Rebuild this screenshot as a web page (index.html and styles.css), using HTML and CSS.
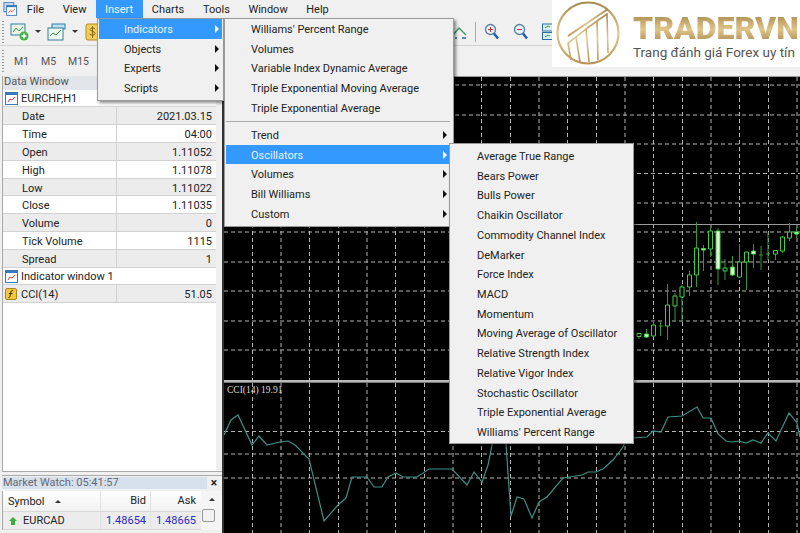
FILE: index.html
```html
<!DOCTYPE html>
<html lang="en">
<head>
    <meta charset="UTF-8">
    <meta name="viewport" content="width=device-width, initial-scale=1.0">
    <title>MetaTrader - Insert Oscillators</title>
    <link rel="stylesheet" href="styles.css">
</head>
<body>
    <!-- Menu bar -->
    <div class="menubar">
        <svg class="app-icon" width="16" height="16" viewBox="0 0 16 16">
            <rect x="1" y="1" width="11" height="10" fill="#cfe2f5" stroke="#3a78b8"/>
            <rect x="4" y="4" width="11" height="11" fill="#fff" stroke="#3a78b8"/>
            <rect x="4" y="4" width="11" height="2" fill="#3a78b8"/>
            <path d="M6 12l2-2 2 1 3-3" fill="none" stroke="#d23b3b"/>
        </svg>
        <a>File</a>
        <a>View</a>
        <a class="active">Insert</a>
        <a>Charts</a>
        <a>Tools</a>
        <a>Window</a>
        <a>Help</a>
    </div>

    <!-- Toolbars -->
    <div class="toolbar">
        <span class="grip"></span>
        <svg width="20" height="18" viewBox="0 0 20 18">
            <rect x="1" y="1" width="14" height="11" fill="#e8f4e8" stroke="#2f7f9f"/>
            <path d="M3 9l3-4 3 3 4-4" fill="none" stroke="#3a9a3a"/>
            <circle cx="14" cy="13" r="4.5" fill="#45b045"/>
            <path d="M14 10.500v5M11.500 13h5" stroke="#fff" stroke-width="1.500"/>
        </svg>
        <span class="caret"></span>
        <svg class="tb-second" width="20" height="18" viewBox="0 0 20 18">
            <rect x="5" y="1" width="13" height="5" fill="#bfe0f2" stroke="#2f7f9f"/>
            <rect x="1" y="5" width="15" height="12" fill="#eef8ee" stroke="#2f7f9f"/>
            <path d="M3 13l3-3 3 2 5-5" fill="none" stroke="#3a9a3a"/>
        </svg>
        <span class="caret"></span>
        <svg class="tb-third" width="14" height="18" viewBox="0 0 14 18">
            <rect x="1" y="1" width="13" height="16" rx="2" fill="#f3cf5a" stroke="#b58a1e"/>
            <path d="M10 6c-1-1.500-5-1.500-5 .5s5 1.500 5 4c0 2-4 2-5.500.5M7.500 3v12" fill="none" stroke="#8a6510"/>
        </svg>
        <div class="toolbar-right">
            <svg width="16" height="16" viewBox="0 0 16 16">
                <path d="M1 11l6-7 7 7" fill="none" stroke="#2f9a5a" stroke-width="1.300"/>
                <path d="M3 14h11" stroke="#2a5fa8" stroke-dasharray="2 5 7" stroke-width="1.500"/>
            </svg>
            <span class="tb-sep"></span>
            <svg width="16" height="18" viewBox="0 0 16 18">
                <circle cx="6.500" cy="6.500" r="5" fill="#eaf3fb" stroke="#5a7f9f" stroke-width="1.300"/>
                <path d="M4 6.500h5M6.500 4v5" stroke="#b03a3a"/>
                <path d="M10 10.500l4 5" stroke="#1f5fa8" stroke-width="2.500"/>
            </svg>
            <svg width="16" height="18" viewBox="0 0 16 18">
                <circle cx="6.500" cy="6.500" r="5" fill="#eaf3fb" stroke="#5a7f9f" stroke-width="1.300"/>
                <path d="M4 6.500h5" stroke="#b03a3a"/>
                <path d="M10 10.500l4 5" stroke="#1f5fa8" stroke-width="2.500"/>
            </svg>
            <svg width="12" height="18" viewBox="0 0 12 18">
                <rect x=".5" y="1" width="14" height="7" fill="#d8eef2" stroke="#2a6fa8"/>
                <rect x=".5" y="9.500" width="14" height="7" fill="#d8eef2" stroke="#2a6fa8"/>
                <path d="M3 5l3-2 2 1M3 14l3-2 2 1" fill="none" stroke="#3a9a3a"/>
            </svg>
        </div>
    </div>
    <div class="toolbar periods">
        <span class="grip"></span>
        <a>M1</a>
        <a>M5</a>
        <a>M15</a>
    </div>

    <div class="workspace">
        <!-- Left side panels -->
        <div class="sidebar">
            <div class="data-window">
                <div class="panel-title">Data Window</div>
                <div class="data-body">
                    <div class="row head">
                        <svg class="row-icon" width="13" height="13" viewBox="0 0 13 13">
                            <rect x=".5" y=".5" width="12" height="12" fill="#fff" stroke="#3a78b8"/>
                            <rect x="1" y="1" width="11" height="2" fill="#3a78b8"/>
                            <path d="M3 10l2-3 2 1 3-3" fill="none" stroke="#d23b3b"/>
                        </svg>
                        EURCHF,H1
                    </div>
                    <div class="row odd"><span class="label">Date</span><span class="value">2021.03.15</span></div>
                    <div class="row"><span class="label">Time</span><span class="value">04:00</span></div>
                    <div class="row odd"><span class="label">Open</span><span class="value">1.11052</span></div>
                    <div class="row"><span class="label">High</span><span class="value">1.11078</span></div>
                    <div class="row odd"><span class="label">Low</span><span class="value">1.11022</span></div>
                    <div class="row"><span class="label">Close</span><span class="value">1.11035</span></div>
                    <div class="row odd"><span class="label">Volume</span><span class="value">0</span></div>
                    <div class="row"><span class="label">Tick Volume</span><span class="value">1115</span></div>
                    <div class="row odd"><span class="label">Spread</span><span class="value">1</span></div>
                    <div class="row head">
                        <svg class="row-icon" width="13" height="13" viewBox="0 0 13 13">
                            <rect x=".5" y=".5" width="12" height="12" fill="#fff" stroke="#3a78b8"/>
                            <rect x="1" y="1" width="11" height="2" fill="#3a78b8"/>
                            <path d="M3 10l2-3 2 1 3-3" fill="none" stroke="#d23b3b"/>
                        </svg>
                        Indicator window 1
                    </div>
                    <div class="row odd">
                        <span class="label">
                            <svg class="func-icon" width="12" height="12" viewBox="0 0 12 12">
                                <rect x=".5" y=".5" width="11" height="11" rx="1.500" fill="#f2c73c" stroke="#a8861e"/>
                                <path d="M8 2.500C6.500 2 6 3 5.500 5.500S5 10 3.500 9.500M4 5.500h3.500" fill="none" stroke="#3a2c00"/>
                            </svg>
                            CCI(14)
                        </span>
                        <span class="value">51.05</span>
                    </div>
                </div>
            </div>

            <div class="market-watch">
                <div class="mw-title">
                    <span>Market Watch: 05:41:57</span>
                    <b>×</b>
                </div>
                <div class="mw-table">
                    <div class="mw-rows">
                        <div class="mw-row mw-head">
                            <span class="mw-symbol">Symbol <i class="sort-up"></i></span>
                            <span class="mw-num">Bid</span>
                            <span class="mw-num">Ask</span>
                        </div>
                        <div class="mw-row mw-quote">
                            <span class="mw-symbol">
                                <svg width="8" height="8" viewBox="0 0 8 8"><path d="M4 0l4 4H6v4H2V4H0z" fill="#3fae3f"/></svg>
                                EURCAD
                            </span>
                            <span class="mw-num price">1.48654</span>
                            <span class="mw-num price">1.48665</span>
                        </div>
                    </div>
                    <div class="mw-scroll">
                        <i class="scroll-up"></i>
                        <i class="scroll-thumb"></i>
                    </div>
                </div>
            </div>
        </div>

        <!-- Chart windows -->
        <div class="charts">
            <svg class="price-pane" width="576" height="303" viewBox="224 77 576 303">
                <path class="grid" d="M224 85H800M224 115H800M224 144H800M224 173.500H800M224 203H800M224 232H800M224 262H800M224 291H800M224 321H800M224 350H800"/>
                <path class="grid" d="M252.500 77V380M281 77V380M309.500 77V380M338.500 77V380M367 77V380M395.500 77V380M424.500 77V380M453 77V380M481.500 77V380M510.500 77V380M539 77V380M567.500 77V380M596.500 77V380M625 77V380M653.500 77V380M682.500 77V380M711 77V380M739.500 77V380M768.500 77V380M797 77V380"/>
                <path class="bid-line" d="M224 224.500H800"/>
                <path class="wick" d="M639 333v6M646.500 329v9M653.500 322v15M660.500 322v14M667.500 284v56M675 293v29M682 285v37M689.500 271v25M696.500 222v65M703.500 245v26M710.500 228v29M718 228v57M725 259v21M732.500 256v20M739.500 244v34M746.500 252v38M753.500 244v24M761 246v24M768 232v28M775.500 250v10M782.500 236v17M789.500 223v18M796.500 227v11M659 326h4M759 255h4M766 254h4"/>
                <path class="body" d="M637 333.500h4v3h-4zM651.500 325h4v11h-4zM665.500 305h4v21h-4zM673 296h4v10h-4zM680 287h4v10h-4zM687.500 275h4v12h-4zM694.500 248h4v27h-4zM708.500 231h4v18h-4zM723 268h4v3h-4zM737.500 262h4v15h-4zM744.500 252h4v10h-4zM773.500 250.500h4v3.500h-4zM780.500 237h4v14h-4zM787.500 232h4v6h-4z"/>
                <path class="body filled" d="M644.500 334h4v3h-4zM701.500 248.500h4v1.500h-4zM716 231h4v38h-4zM730.500 267h4v8h-4zM751.500 251h4v3h-4zM794.500 232h4v2h-4z"/>
            </svg>
            <div class="pane-split"></div>
            <div class="cci-pane">
                <span class="cci-label">CCI(14) 19.91</span>
                <svg width="576" height="150" viewBox="224 383 576 150">
                    <path class="grid" d="M224 431.500H800M224 454H800M224 478H800"/>
                    <path class="grid" d="M252.500 383V533M281 383V533M309.500 383V533M338.500 383V533M367 383V533M395.500 383V533M424.500 383V533M453 383V533M481.500 383V533M510.500 383V533M539 383V533M567.500 383V533M596.500 383V533M625 383V533M653.500 383V533M682.500 383V533M711 383V533M739.500 383V533M768.500 383V533M797 383V533"/>
                    <polyline class="cci-line" points="224,435 231,420 238,415 252,445 259,436 267,445 280,442 288,441 295,445 309,459 324,521 338,505 346,498 352,477 367,477 374,487 382,487 388,477 396,473 403,477 417,477 429,469 452,469 467,485 474,472 482,482 488,465 495,430 505,430 511,516 517,497 524,499 532,518 539,502 547,497 563,478 582,475 588,472 596,472 603,469 613,460 623,447 625,442 633,438 647,437 653,431 661,432 668,417 682,416 697,407 703,418 711,418 718,434 726,441 732,442 739,441 746,443 753,440 761,443 768,433 776,441 789,413 797,423 800,437"/>
                </svg>
            </div>
        </div>
    </div>

    <!-- Open Insert menu -->
    <div class="menu menu-insert">
        <div class="item selected">Indicators<i class="arrow"></i></div>
        <div class="item">Objects<i class="arrow"></i></div>
        <div class="item">Experts<i class="arrow"></i></div>
        <div class="item">Scripts<i class="arrow"></i></div>
    </div>
    <div class="menu menu-indicators">
        <div class="item">Williams' Percent Range</div>
        <div class="item">Volumes</div>
        <div class="item">Variable Index Dynamic Average</div>
        <div class="item">Triple Exponential Moving Average</div>
        <div class="item">Triple Exponential Average</div>
        <div class="menu-sep"></div>
        <div class="item">Trend<i class="arrow"></i></div>
        <div class="item selected">Oscillators<i class="arrow"></i></div>
        <div class="item">Volumes<i class="arrow"></i></div>
        <div class="item">Bill Williams<i class="arrow"></i></div>
        <div class="item">Custom<i class="arrow"></i></div>
    </div>
    <div class="menu menu-oscillators">
        <div class="item">Average True Range</div>
        <div class="item">Bears Power</div>
        <div class="item">Bulls Power</div>
        <div class="item">Chaikin Oscillator</div>
        <div class="item">Commodity Channel Index</div>
        <div class="item">DeMarker</div>
        <div class="item">Force Index</div>
        <div class="item">MACD</div>
        <div class="item">Momentum</div>
        <div class="item">Moving Average of Oscillator</div>
        <div class="item">Relative Strength Index</div>
        <div class="item">Relative Vigor Index</div>
        <div class="item">Stochastic Oscillator</div>
        <div class="item">Triple Exponential Average</div>
        <div class="item">Williams' Percent Range</div>
    </div>

    <!-- Logo on top -->
    <div class="brand">
        <svg class="brand-mark" width="66" height="66" viewBox="0 0 66 66">
            <defs>
                <linearGradient id="gold" x1="0" y1="0" x2="0" y2="1">
                    <stop offset="0" stop-color="#a98a4f"/>
                    <stop offset=".5" stop-color="#e2c98f"/>
                    <stop offset="1" stop-color="#b8945a"/>
                </linearGradient>
            </defs>
            <g fill="none" stroke="url(#gold)">
                <circle cx="32" cy="33" r="30.500" stroke-width="2.200"/>
                <path d="M12 36L52 9" stroke-width="2"/>
                <path d="M15 60l-3-17 8-6 4 25M24 62l-4-25 10-8 3 33M33 62l-3-33 11-8 1 39M42 60l-1-39 10-7 1 39" stroke-width="1.600"/>
            </g>
        </svg>
        <div class="brand-text">
            <div class="brand-name">TRADERVN</div>
            <div class="brand-sub">Trang đánh giá Forex uy tín</div>
        </div>
    </div>
</body>
</html>
```

FILE: styles.css
```css
* {
    margin: 0;
    padding: 0;
    box-sizing: border-box;
}

body {
    width: 800px;
    height: 533px;
    overflow: hidden;
    position: relative;
    background: #f0f0f0;
    color: #222;
    font-family: Roboto, "Noto Sans", sans-serif;
    font-size: 11px;
}

/* Menu bar */
.menubar {
    display: flex;
    align-items: center;
    height: 18px;
}

.app-icon {
    margin: 0 0 0 3px;
    width: 14.5px;
}

.menubar a {
    display: block;
    height: 18px;
    line-height: 20px;
    padding: 0 9.3px;
}

.menubar a.active {
    background: #3399ff;
    color: #eaf4ff;
}

/* Toolbars */
.toolbar {
    display: flex;
    align-items: center;
    height: 28px;
    border-bottom: 1px solid #d4d4d4;
    padding-left: 2px;
}

.grip {
    width: 2px;
    height: 22px;
    margin-right: 6px;
    background: repeating-linear-gradient(to bottom, #999 0 1px, transparent 1px 3px);
}

.caret {
    width: 0;
    height: 0;
    margin-left: 5px;
    border-left: 3px solid transparent;
    border-right: 3px solid transparent;
    border-top: 3px solid #333;
}

.tb-second {
    margin-left: 6px;
}

.tb-third {
    margin-left: 7px;
}

.toolbar-right {
    display: flex;
    align-items: center;
    position: absolute;
    left: 452px;
    top: 22px;
}

.toolbar-right svg {
    margin-right: 13px;
}

.toolbar-right svg:first-child {
    margin-right: 7px;
}

.tb-sep {
    width: 1px;
    height: 20px;
    background: #aaa;
    margin-right: 8px;
}

.periods {
    height: 30px;
    border-bottom: 0;
    color: #555;
    font-size: 10.5px;
}

.periods a {
    width: 27px;
    padding-left: 4px;
}

/* Workspace */
.workspace {
    display: flex;
    height: 457px;
}

.sidebar {
    display: flex;
    flex-direction: column;
    width: 222px;
    padding-left: 2px;
}

.data-window {
    height: 396px;
    border-left: 1px solid #a9a9a9;
    border-bottom: 1px solid #a9a9a9;
}

.panel-title {
    height: 14px;
    line-height: 11px;
    background: #e2e6ea;
    color: #555;
    padding-left: 1px;
}

.data-body {
    width: 213px;
    height: 381px;
    background: #fff;
}

.row {
    display: flex;
    height: 17.9px;
    border-bottom: 1px solid #d2d2d2;
}

.row.head {
    align-items: center;
    height: 17px;
    gap: 3px;
    padding-left: 2px;
}

.row.odd {
    background: #ececec;
}

.row-icon {
    flex: none;
}

.label {
    display: flex;
    align-items: center;
    gap: 4px;
    width: 114px;
    padding: 2px 0 0 19px;
    border-right: 1px solid #d2d2d2;
}

.label .func-icon {
    margin-left: -17px;
}

.value {
    flex: 1;
    display: flex;
    align-items: center;
    justify-content: flex-end;
    padding: 2px 4px 0 0;
}

/* Market watch */
.market-watch {
    flex: 1;
    margin-top: 3px;
    border-top: 1px solid #a9a9a9;
    padding-top: 1px;
}

.mw-title {
    display: flex;
    justify-content: space-between;
    align-items: center;
    height: 12px;
    line-height: 12px;
    color: #667;
    padding-right: 5px;
    font-size: 11px;
}

.mw-title span {
    flex: 1;
    background: #d6e1ec;
    margin-right: 4px;
    padding-left: 1px;
}

.mw-title b {
    color: #222;
    font-size: 12px;
}

.mw-table {
    display: flex;
    margin-top: 2px;
    border-left: 1px solid #a9a9a9;
}

.mw-rows {
    width: 198px;
    background: #fff;
}

.mw-row {
    display: flex;
    align-items: center;
    height: 21px;
    border-bottom: 1px solid #d8d8d8;
}

.mw-head {
    background: linear-gradient(to bottom, #fff, #f1f1f1);
}

.mw-quote {
    height: 18px;
    background: #ececec;
}

.mw-symbol {
    display: flex;
    align-items: center;
    gap: 5px;
    width: 97px;
    padding-left: 5px;
}

.mw-quote .mw-symbol {
    padding-left: 6px;
    gap: 6px;
}

.mw-num {
    width: 50px;
    height: 100%;
    line-height: 19px;
    text-align: right;
    padding-right: 4px;
    border-left: 1px solid #e2e2e2;
}

.price {
    color: #2a2ac0;
    line-height: 17px;
}

.sort-up {
    margin-left: 5px;
    border-left: 3px solid transparent;
    border-right: 3px solid transparent;
    border-bottom: 3px solid #333;
}

.mw-scroll {
    flex: 1;
    width: 15px;
    background: #f5f5f5;
    padding-top: 7px;
}

.scroll-up {
    display: block;
    width: 0;
    margin: 0 auto 8px;
    border-left: 3px solid transparent;
    border-right: 3px solid transparent;
    border-bottom: 3px solid #333;
}

.scroll-thumb {
    display: block;
    width: 13px;
    height: 13px;
    margin-left: 1px;
    background: #f2f2f2;
    border: 1px solid #999;
    border-radius: 2px;
}

/* Charts */
.charts {
    width: 578px;
    background: #000;
    border-top: 1px solid #999;
    border-left: 2px solid #333;
}

.charts svg {
    display: block;
}

.grid {
    fill: none;
    stroke: #b4b4b4;
    stroke-width: 1;
    stroke-dasharray: 4 3;
}

.bid-line {
    stroke: #9a9a9a;
    stroke-width: 1;
}

.wick {
    fill: none;
    stroke: #2f9a2f;
    stroke-width: 1;
}

.body {
    fill: #000;
    stroke: #3fcf3f;
    stroke-width: 1;
}

.body.filled {
    fill: #e4ffdc;
}

.pane-split {
    height: 3px;
    background: #b8b8b8;
    border-bottom: 1px solid #777;
}

.cci-pane {
    position: relative;
}

.cci-label {
    position: absolute;
    left: 3px;
    top: 2px;
    color: #d8d8d8;
    font-family: "Liberation Serif", serif;
    font-size: 9.5px;
    z-index: 1;
}

.cci-line {
    fill: none;
    stroke: #3f8f86;
    stroke-width: 1.2;
}

/* Drop down menus */
.menu {
    position: absolute;
    background: #f0f0f0;
    border: 1px solid #9a9a9a;
    padding: 0 1px;
    box-shadow: 2px 2px 3px rgba(0, 0, 0, 0.45);
}

.item {
    position: relative;
    height: 19.72px;
    padding-top: 2px;
    line-height: 17.72px;
    white-space: nowrap;
}

.item.selected {
    background: #3399ff;
    color: #e6f2ff;
}

.arrow {
    position: absolute;
    right: 3px;
    top: 6px;
    border-top: 4px solid transparent;
    border-bottom: 4px solid transparent;
    border-left: 4px solid #111;
}

.selected .arrow {
    border-left-color: #fff;
}

.menu-insert {
    left: 97px;
    top: 18px;
    width: 127px;
    height: 83px;
}

.menu-insert .item {
    padding-left: 25px;
}

.menu-indicators {
    left: 224px;
    top: 18px;
    width: 230px;
    height: 209px;
    z-index: 1;
}

.menu-indicators .item {
    padding-left: 25px;
}

.menu-indicators .arrow {
    right: 5px;
}

.menu-sep {
    height: 1px;
    background: #a8a8a8;
    margin: 3.5px 2px 2.8px 0;
}

.menu-oscillators {
    left: 449px;
    top: 143px;
    width: 185px;
    height: 301px;
    padding-top: 2px;
    z-index: 2;
}

.menu-oscillators .item {
    padding-left: 26px;
}

/* Logo */
.brand {
    position: absolute;
    left: 552px;
    top: 0;
    width: 248px;
    height: 67px;
    background: #fff;
    display: flex;
    overflow: hidden;
    padding-left: 4px;
    z-index: 3;
}

.brand-mark {
    flex: none;
}

.brand-text {
    margin-left: 11px;
}

.brand-name {
    margin-top: 14px;
    font-size: 32px;
    line-height: 28px;
    font-weight: 900;
    background: linear-gradient(to bottom, #a98a4f, #e0c58b 55%, #b08d55);
    -webkit-background-clip: text;
    background-clip: text;
    color: transparent;
}

.brand-sub {
    margin-top: 2px;
    color: #555;
    font-size: 13.5px;
    line-height: 16px;
    white-space: nowrap;
}
```
